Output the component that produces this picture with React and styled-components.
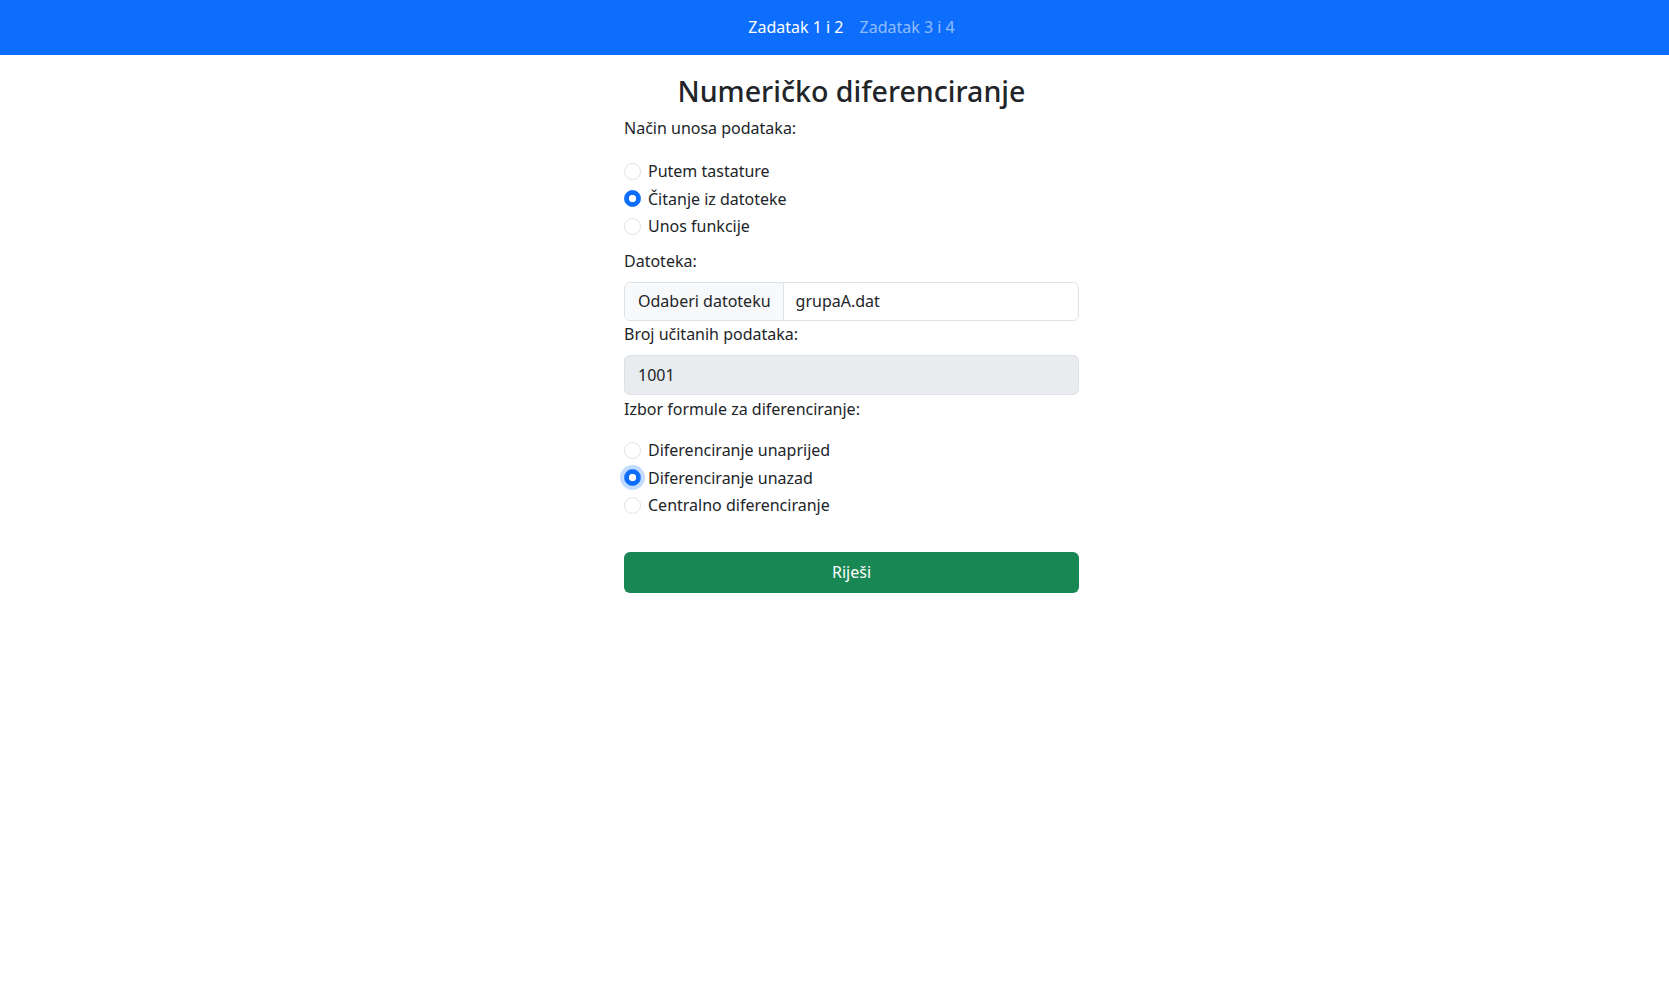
import { useState } from "react";
import styled, { createGlobalStyle } from "styled-components";

const GlobalStyle = createGlobalStyle`
  body {
    margin: 0;
    font-family: "Segoe UI", "Noto Sans", "Open Sans", sans-serif;
    font-size: 16px;
    color: #212529;
    background: #fff;
  }
  * {
    box-sizing: border-box;
  }
`;

const Navbar = styled.nav`
  height: 55px;
  background-color: #0d6efd;
  display: flex;
  align-items: center;
  justify-content: center;
  padding-left: 34px;
  padding-bottom: 2px;
`;

const NavLink = styled.a`
  padding: 0 8px;
  font-size: 16px;
  line-height: 24px;
  text-decoration: none;
  cursor: pointer;
  color: ${(p) => (p.$active ? "#fff" : "rgba(255, 255, 255, 0.55)")};
`;

const Main = styled.main`
  display: flex;
  flex-direction: column;
  align-items: center;
  padding-left: 34px;
`;

const Title = styled.h2`
  margin: 17px 0 6px;
  font-size: 28.6px;
  font-weight: 500;
  line-height: 38px;
`;

const Form = styled.form`
  width: 455px;
  display: flex;
  flex-direction: column;
`;

const Label = styled.label`
  display: block;
  line-height: 24px;
  margin-top: ${(p) => p.$top || 0}px;
  margin-bottom: ${(p) => p.$gap || 0}px;
`;

const RadioGroup = styled.div`
  display: flex;
  flex-direction: column;
  margin-top: ${(p) => p.$top}px;
  margin-bottom: ${(p) => p.$bottom}px;
`;

const RadioRow = styled.label`
  height: 27.5px;
  display: flex;
  align-items: center;
  gap: 7px;
  cursor: pointer;
`;

const Radio = styled.input.attrs({ type: "radio" })`
  appearance: none;
  margin: 0;
  width: 17px;
  height: 17px;
  border-radius: 50%;
  border: 1px solid #dee2e6;
  background: #fff;
  flex-shrink: 0;
  cursor: pointer;
  &:checked {
    border-color: #0d6efd;
    background: radial-gradient(circle, #fff 0 3.4px, #0d6efd 4px);
  }
  ${(p) => p.$focus && "box-shadow: 0 0 0 4px rgba(13, 110, 253, 0.25);"}
  &:focus {
    outline: none;
  }
`;

const InputGroup = styled.div`
  display: flex;
  height: 39px;
  border: 1px solid #dee2e6;
  border-radius: 6px;
  overflow: hidden;
`;

const Addon = styled.span`
  display: flex;
  align-items: center;
  padding: 0 12px 0 13px;
  background: #f8f9fa;
  border-right: 1px solid #dee2e6;
`;

const FileName = styled.span`
  display: flex;
  align-items: center;
  padding-left: 12px;
  flex: 1;
`;

const ReadOnly = styled.div`
  height: 40px;
  display: flex;
  align-items: center;
  padding-left: 13px;
  background: #e9ecef;
  border: 1px solid #dee2e6;
  border-radius: 6px;
  margin-bottom: 2px;
`;

const SubmitButton = styled.button`
  height: 41px;
  border: none;
  border-radius: 6px;
  background: #198754;
  color: #fff;
  font-family: inherit;
  font-size: 16px;
  cursor: pointer;
  &:hover {
    background: #157347;
  }
`;

const inputModes = ["Putem tastature", "Čitanje iz datoteke", "Unos funkcije"];
const formulas = [
  "Diferenciranje unaprijed",
  "Diferenciranje unazad",
  "Centralno diferenciranje",
];

export default function App() {
  const [mode, setMode] = useState(1);
  const [formula, setFormula] = useState(1);

  return (
    <>
      <GlobalStyle />
      <Navbar>
        <NavLink $active>Zadatak 1 i 2</NavLink>
        <NavLink>Zadatak 3 i 4</NavLink>
      </Navbar>
      <Main>
        <Title>Numeričko diferenciranje</Title>
        <Form onSubmit={(e) => e.preventDefault()}>
          <Label>Način unosa podataka:</Label>
          <RadioGroup $top={17.5} $bottom={8.7}>
            {inputModes.map((m, i) => (
              <RadioRow key={m}>
                <Radio
                  name="mode"
                  checked={mode === i}
                  onChange={() => setMode(i)}
                />
                {m}
              </RadioRow>
            ))}
          </RadioGroup>

          <Label $gap={9}>Datoteka:</Label>
          <InputGroup>
            <Addon>Odaberi datoteku</Addon>
            <FileName>grupaA.dat</FileName>
          </InputGroup>

          <Label $top={1} $gap={9}>
            Broj učitanih podataka:
          </Label>
          <ReadOnly>1001</ReadOnly>

          <Label>Izbor formule za diferenciranje:</Label>
          <RadioGroup $top={16} $bottom={32.5}>
            {formulas.map((f, i) => (
              <RadioRow key={f}>
                <Radio
                  name="formula"
                  checked={formula === i}
                  $focus={i === 1}
                  onChange={() => setFormula(i)}
                />
                {f}
              </RadioRow>
            ))}
          </RadioGroup>

          <SubmitButton type="submit">Riješi</SubmitButton>
        </Form>
      </Main>
    </>
  );
}
